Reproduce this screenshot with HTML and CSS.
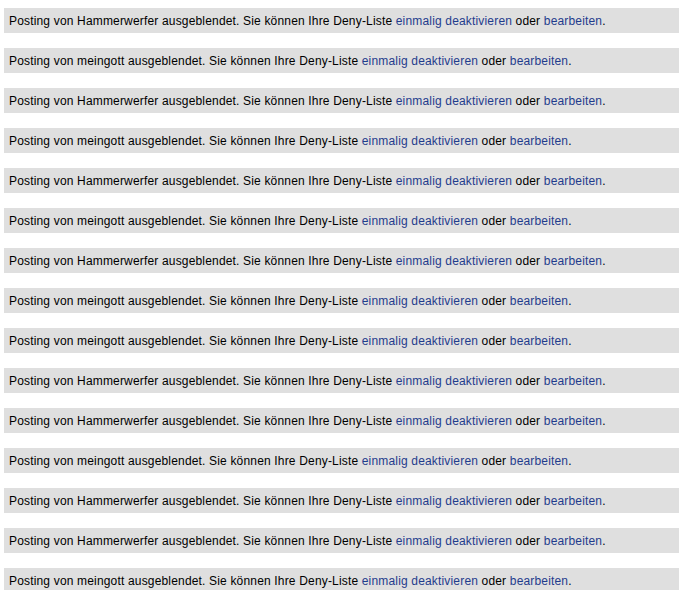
FILE: index.html
```html
<!DOCTYPE html>
<html lang="de">
<head>
  <meta charset="UTF-8">
  <title>Deny-Liste</title>
  <link rel="stylesheet" href="styles.css">
</head>
<body>
  <div class="postings">
    <div class="hidden-post">Posting von Hammerwerfer ausgeblendet. Sie können Ihre Deny-Liste <a href="#">einmalig deaktivieren</a> oder <a href="#">bearbeiten</a>.</div>
    <div class="hidden-post">Posting von meingott ausgeblendet. Sie können Ihre Deny-Liste <a href="#">einmalig deaktivieren</a> oder <a href="#">bearbeiten</a>.</div>
    <div class="hidden-post">Posting von Hammerwerfer ausgeblendet. Sie können Ihre Deny-Liste <a href="#">einmalig deaktivieren</a> oder <a href="#">bearbeiten</a>.</div>
    <div class="hidden-post">Posting von meingott ausgeblendet. Sie können Ihre Deny-Liste <a href="#">einmalig deaktivieren</a> oder <a href="#">bearbeiten</a>.</div>
    <div class="hidden-post">Posting von Hammerwerfer ausgeblendet. Sie können Ihre Deny-Liste <a href="#">einmalig deaktivieren</a> oder <a href="#">bearbeiten</a>.</div>
    <div class="hidden-post">Posting von meingott ausgeblendet. Sie können Ihre Deny-Liste <a href="#">einmalig deaktivieren</a> oder <a href="#">bearbeiten</a>.</div>
    <div class="hidden-post">Posting von Hammerwerfer ausgeblendet. Sie können Ihre Deny-Liste <a href="#">einmalig deaktivieren</a> oder <a href="#">bearbeiten</a>.</div>
    <div class="hidden-post">Posting von meingott ausgeblendet. Sie können Ihre Deny-Liste <a href="#">einmalig deaktivieren</a> oder <a href="#">bearbeiten</a>.</div>
    <div class="hidden-post">Posting von meingott ausgeblendet. Sie können Ihre Deny-Liste <a href="#">einmalig deaktivieren</a> oder <a href="#">bearbeiten</a>.</div>
    <div class="hidden-post">Posting von Hammerwerfer ausgeblendet. Sie können Ihre Deny-Liste <a href="#">einmalig deaktivieren</a> oder <a href="#">bearbeiten</a>.</div>
    <div class="hidden-post">Posting von Hammerwerfer ausgeblendet. Sie können Ihre Deny-Liste <a href="#">einmalig deaktivieren</a> oder <a href="#">bearbeiten</a>.</div>
    <div class="hidden-post">Posting von meingott ausgeblendet. Sie können Ihre Deny-Liste <a href="#">einmalig deaktivieren</a> oder <a href="#">bearbeiten</a>.</div>
    <div class="hidden-post">Posting von Hammerwerfer ausgeblendet. Sie können Ihre Deny-Liste <a href="#">einmalig deaktivieren</a> oder <a href="#">bearbeiten</a>.</div>
    <div class="hidden-post">Posting von Hammerwerfer ausgeblendet. Sie können Ihre Deny-Liste <a href="#">einmalig deaktivieren</a> oder <a href="#">bearbeiten</a>.</div>
    <div class="hidden-post">Posting von meingott ausgeblendet. Sie können Ihre Deny-Liste <a href="#">einmalig deaktivieren</a> oder <a href="#">bearbeiten</a>.</div>
  </div>
</body>
</html>
```

FILE: styles.css
```css
body {
  margin: 0;
  padding: 8px 0 0 4px;
  background: #fff;
  color: #000;
  font-family: "Liberation Sans", Arial, sans-serif;
  font-size: 12px;
  letter-spacing: 0.17px;
  overflow: hidden;
}

.postings {
  display: flex;
  flex-direction: column;
  gap: 15px;
}

.hidden-post {
  height: 24px;
  padding: 1px 0 0 5px;
  line-height: 25px;
  background: #dfdfdf;
  white-space: nowrap;
}

.hidden-post a {
  color: #1f3c8d;
  text-decoration: none;
}
```
